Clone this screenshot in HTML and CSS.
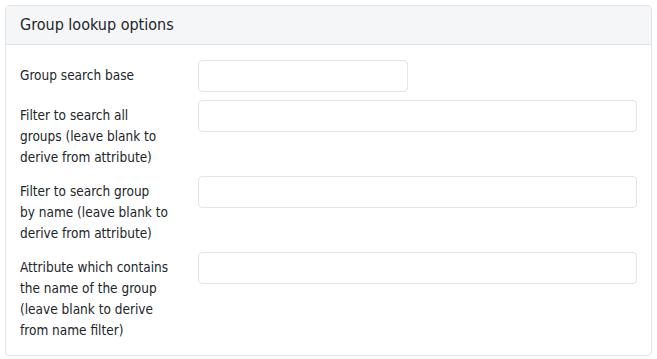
FILE: index.html
```html
<!DOCTYPE html>
<html lang="en">
<head>
    <meta charset="UTF-8">
    <meta name="viewport" content="width=device-width, initial-scale=1.0">
    <title>Group lookup options</title>
    <link rel="stylesheet" href="styles.css">
</head>
<body>
    <div class="card">
        <div class="card-header">Group lookup options</div>
        <div class="card-body">
            <div class="row">
                <label class="label" for="base">Group search base</label>
                <div class="field"><input class="input short" id="base" type="text"></div>
            </div>
            <div class="row">
                <label class="label" for="all">Filter to search all groups (leave blank to derive from attribute)</label>
                <div class="field"><input class="input" id="all" type="text"></div>
            </div>
            <div class="row">
                <label class="label" for="byname">Filter to search group<br>by name (leave blank to derive from attribute)</label>
                <div class="field"><input class="input" id="byname" type="text"></div>
            </div>
            <div class="row">
                <label class="label" for="attr">Attribute which contains the name of the group (leave blank to derive from name filter)</label>
                <div class="field"><input class="input" id="attr" type="text"></div>
            </div>
        </div>
    </div>
</body>
</html>
```

FILE: styles.css
```css
body {
    margin: 0;
    padding: 5px;
    background-color: #ffffff;
    color: #212529;
    font-family: "DejaVu Sans Condensed", "DejaVu Sans", Verdana, sans-serif;
}

.card {
    border: 1px solid #e1e3e8;
    border-radius: 4px;
    overflow: hidden;
}

.card-header {
    height: 38px;
    line-height: 38px;
    padding: 0 14px;
    background-color: #f5f6f8;
    border-bottom: 1px solid #e1e3e8;
    font-size: 16px;
}

.card-body {
    padding: 15px 14px 14px;
    display: flex;
    flex-direction: column;
    gap: 8px;
}

.row {
    display: flex;
    align-items: flex-start;
    gap: 27px;
}

.label {
    width: 151px;
    flex-shrink: 0;
    padding-top: 5px;
    font-size: 13.5px;
    line-height: 21px;
}

.field {
    flex: 1;
}

.input {
    display: block;
    box-sizing: border-box;
    width: 100%;
    height: 32px;
    margin: 0;
    border: 1px solid #e1e3e8;
    border-radius: 4px;
    background-color: #ffffff;
}

.input.short {
    width: 210px;
}
```
